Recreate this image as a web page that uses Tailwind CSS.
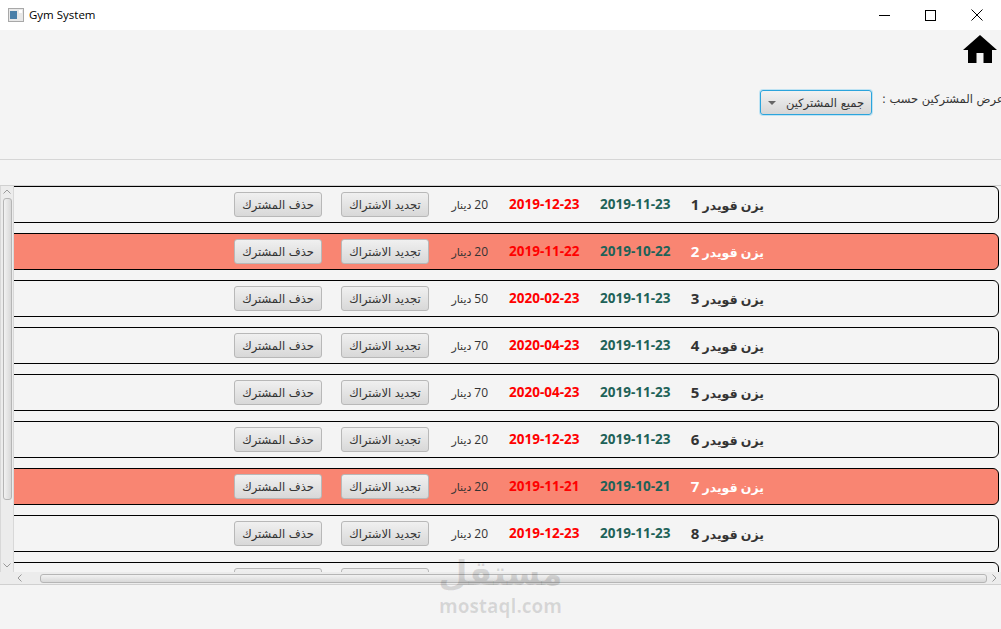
<!DOCTYPE html>
<html lang="ar">
<head>
    <meta charset="UTF-8">
    <title>Gym System</title>
    <script src="https://cdn.jsdelivr.net/npm/@tailwindcss/browser@4"></script>
</head>
<body class="bg-[#f4f4f4] font-['DejaVu_Sans',sans-serif] overflow-hidden">
    <div class="relative h-[629px] w-[1001px] overflow-hidden">
        <!-- Title bar -->
        <div class="flex h-[30px] items-center bg-white pl-2 pr-[18px]">
            <svg width="16" height="14" viewBox="0 0 16 14" class="mr-[5px]">
                <rect x="0.5" y="0.5" width="15" height="13" fill="#e8e8e8" stroke="#a8a8a8"/>
                <rect x="2" y="3" width="7" height="8" fill="#4a7fa8"/>
                <rect x="11" y="2" width="3" height="3" fill="#fff"/>
            </svg>
            <span class="font-['Open_Sans',sans-serif] text-[11.5px] text-black">Gym System</span>
            <div class="ml-auto flex items-center gap-[35px]">
                <svg width="11" height="11" viewBox="0 0 11 11"><path d="M0 5.5H11" stroke="#000" stroke-width="1"/></svg>
                <svg width="11" height="11" viewBox="0 0 11 11"><rect x="0.5" y="0.5" width="10" height="10" fill="none" stroke="#000"/></svg>
                <svg width="12" height="12" viewBox="0 0 12 12"><path d="M0.5 0.5L11.5 11.5M11.5 0.5L0.5 11.5" stroke="#000" stroke-width="1"/></svg>
            </div>
        </div>

        <!-- Filter area -->
        <div class="relative h-[130px] border-b border-[#d6d6d6]">
            <svg width="34" height="28" viewBox="0 0 34 28" class="absolute right-[4px] top-[5px]">
                <path d="M17 0L34 15H29V28H20.5V18H13.5V28H5V15H0Z" fill="#000"/>
            </svg>
            <div class="flex pt-[60px] pl-[760px]">
                <div class="flex h-[25px] w-[112px] shrink-0 items-center justify-between rounded-[3px] border border-[#2ba4dc] bg-gradient-to-b from-[#f2f2f2] to-[#d6d6d6] pl-[7px] pr-[7px] shadow-[0_0_0_1px_#bfe3f3]">
                    <svg width="8" height="4" viewBox="0 0 8 4"><path d="M0 0H8L4 4Z" fill="#666"/></svg>
                    <span dir="rtl" class="whitespace-nowrap pt-[2px] text-[11.5px] text-[#333]">جميع المشتركين</span>
                </div>
                <span dir="rtl" class="ml-[10px] shrink-0 whitespace-nowrap pt-[1px] text-[11.5px] text-[#333]">عرض المشتركين حسب :</span>
            </div>
        </div>

        <!-- Subscribers list -->
        <div class="mt-[25px] flex h-[400px] flex-col border-y border-[#d0d0d0]">
            <div class="flex h-[386px]">
                <div class="relative flex w-[14px] shrink-0 flex-col items-center border-x border-[#d8d8d8] bg-[#ececec]">
                    <svg width="8" height="5" viewBox="0 0 8 5" class="mt-[3px]"><path d="M0.5 4.5L4 1L7.5 4.5" fill="none" stroke="#999"/></svg>
                    <div class="mt-[4px] h-[302px] w-[9px] rounded-[3px] border border-[#b5b5b5] bg-gradient-to-r from-[#f2f2f2] to-[#d8d8d8]"></div>
                    <svg width="8" height="5" viewBox="0 0 8 5" class="absolute bottom-[4px]"><path d="M0.5 0.5L4 4L7.5 0.5" fill="none" stroke="#999"/></svg>
                </div>
                <div id="rows" class="flex min-w-0 flex-1 flex-col gap-[10px] overflow-hidden pr-[2px]"></div>
            </div>
            <div class="flex h-[12px] items-center bg-[#ececec]">
                <svg width="5" height="8" viewBox="0 0 5 8" class="ml-[17px]"><path d="M4.5 0.5L1 4L4.5 7.5" fill="none" stroke="#999"/></svg>
                <div class="ml-[18px] h-[9px] w-[947px] rounded-[3px] border border-[#b5b5b5] bg-gradient-to-b from-[#f2f2f2] to-[#d8d8d8]"></div>
                <svg width="5" height="8" viewBox="0 0 5 8" class="ml-[5px]"><path d="M0.5 0.5L4 4L0.5 7.5" fill="none" stroke="#999"/></svg>
            </div>
        </div>

        <!-- Watermark -->
        <div class="pointer-events-none absolute left-[440px] top-[551px] flex w-[121px] flex-col items-center text-[#000]/12">
            <span class="text-[34px] font-bold leading-[44px]">مستقل</span>
            <span class="font-['Open_Sans',sans-serif] text-[19px] font-bold leading-[22px]">mostaql.com</span>
        </div>
    </div>

    <script>
        const subscribers = [
            [1, '2019-11-23', '2019-12-23', 20, false],
            [2, '2019-10-22', '2019-11-22', 20, true],
            [3, '2019-11-23', '2020-02-23', 50, false],
            [4, '2019-11-23', '2020-04-23', 70, false],
            [5, '2019-11-23', '2020-04-23', 70, false],
            [6, '2019-11-23', '2019-12-23', 20, false],
            [7, '2019-10-21', '2019-11-21', 20, true],
            [8, '2019-11-23', '2019-12-23', 20, false],
            [9, '2019-11-23', '2019-12-23', 20, false],
        ];
        const rows = document.getElementById('rows');
        subscribers.forEach(([n, start, end, price, expired]) => {
            rows.innerHTML += `
                <div dir="rtl" class="-ml-[20px] flex h-[37px] shrink-0 items-center rounded-[6px] border border-black pr-[234px] ${expired ? 'bg-[#f98572]' : 'bg-[#f4f4f4]'}">
                    <span class="w-[73px] whitespace-nowrap font-['Open_Sans','DejaVu_Sans',sans-serif] text-[12.5px] font-bold ${expired ? 'text-white' : 'text-[#333]'}">يزن قويدر <span class="text-[15px]">${n}</span></span>
                    <span dir="ltr" class="mr-[20px] w-[71px] whitespace-nowrap font-['Open_Sans',sans-serif] text-[13.5px] font-bold text-[#1e6258]">${start}</span>
                    <span dir="ltr" class="mr-[21px] w-[70px] whitespace-nowrap font-['Open_Sans',sans-serif] text-[13.5px] font-bold text-[#ff0000]">${end}</span>
                    <span class="mr-[21px] w-[38px] whitespace-nowrap font-['Open_Sans','DejaVu_Sans',sans-serif] text-[11px] text-[#333]"><span class="text-[12px]">${price}</span> دينار</span>
                    <button class="mr-[21px] h-[25px] w-[88px] whitespace-nowrap rounded-[3px] border border-[#b8b8b8] bg-gradient-to-b from-[#f0f0f0] to-[#d8d8d8] pt-[2px] text-[11.5px] text-[#333]">تجديد الاشتراك</button>
                    <button class="mr-[19px] h-[25px] w-[88px] whitespace-nowrap rounded-[3px] border border-[#b8b8b8] bg-gradient-to-b from-[#f0f0f0] to-[#d8d8d8] pt-[2px] text-[11.5px] text-[#333]">حذف المشترك</button>
                </div>`;
        });
    </script>
</body>
</html>
